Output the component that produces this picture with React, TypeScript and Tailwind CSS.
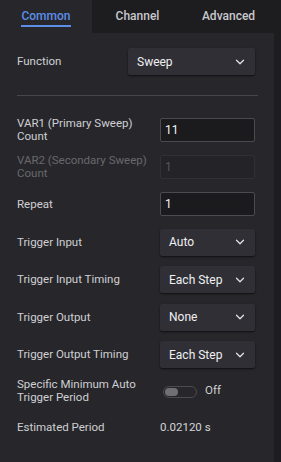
import React from 'react';
import { ChevronDown } from 'lucide-react';

const font = { fontFamily: 'Roboto, "Liberation Sans", sans-serif' };

const Select = ({ value, wide }: { value: string; wide?: boolean }) => (
  <div
    className={`flex h-[27px] items-center justify-between rounded-[2px] bg-[#2f2f35] pl-[9px] pr-[8px] text-[12px] text-[#f0f0f2] shadow-[0_1px_2px_rgba(0,0,0,0.6)] ${
      wide ? 'w-[127px]' : 'w-[95px]'
    }`}
  >
    <span>{value}</span>
    <ChevronDown className="h-[14px] w-[14px] text-[#e0e0e4]" strokeWidth={2.2} />
  </div>
);

const Input = ({ value, disabled }: { value: string; disabled?: boolean }) => (
  <div
    className={`flex h-[24px] w-[95px] items-center rounded-[2px] border pl-[4px] text-[12px] ${
      disabled ? 'border-[#303035] bg-[#242428] text-[#55555a]' : 'border-[#4a4a50] bg-[#1b1b1e] text-[#f4f4f6]'
    }`}
  >
    {value}
  </div>
);

const Row = ({ label, h, disabled, children }: { label: React.ReactNode; h: string; disabled?: boolean; children: React.ReactNode }) => (
  <div className={`flex items-center ${h}`}>
    <div className={`w-[143px] text-[11.5px] leading-[13px] ${disabled ? 'text-[#68686d]' : 'text-[#cfcfd3]'}`}>{label}</div>
    {children}
  </div>
);

export default function App() {
  return (
    <div className="flex h-[462px] w-[281px] bg-[#1d1d20]" style={font}>
      <div className="flex w-[274px] flex-col">
        <div className="flex h-[33px] text-[12px] font-medium">
          <div className="flex w-[92px] flex-col items-center bg-[#27272b] pt-[9px] text-[#5b8ee8]">
            <span className="border-b-2 border-[#5b8ee8] pb-[2px] leading-[14px]">Common</span>
          </div>
          <div className="flex w-[91px] justify-center pt-[9px] leading-[14px] text-[#c8c8cc]">Channel</div>
          <div className="flex w-[91px] justify-center pt-[9px] leading-[14px] text-[#c8c8cc]">Advanced</div>
        </div>
        <div className="flex flex-1 flex-col bg-[#27272b] pl-[17px] pt-[15px]">
          <div className="flex h-[27px] items-center pr-[19px]">
            <div className="w-[111px] text-[11.5px] text-[#cfcfd3]">Function</div>
            <Select value="Sweep" wide />
          </div>
          <div className="mr-[16px] mt-[20px] h-px bg-[#46464b]" />
          <div className="mt-[15px]">
            <Row label={<>VAR1 (Primary Sweep)<br />Count</>} h="h-[37px]">
              <Input value="11" />
            </Row>
            <Row label={<>VAR2 (Secondary Sweep)<br />Count</>} h="h-[37px]" disabled>
              <Input value="1" disabled />
            </Row>
            <Row label="Repeat" h="h-[38px]">
              <Input value="1" />
            </Row>
            <Row label="Trigger Input" h="h-[38px]">
              <Select value="Auto" />
            </Row>
            <Row label="Trigger Input Timing" h="h-[37px]">
              <Select value="Each Step" />
            </Row>
            <Row label="Trigger Output" h="h-[38px]">
              <Select value="None" />
            </Row>
            <Row label="Trigger Output Timing" h="h-[37px]">
              <Select value="Each Step" />
            </Row>
            <Row label={<>Specific Minimum Auto<br />Trigger Period</>} h="h-[36px]">
              <div className="flex items-start pl-[3px]">
                <div className="mt-[4px] flex h-[12px] w-[34px] items-center rounded-full border border-[#4a4a4f] px-[1px]">
                  <div className="h-[8px] w-[13px] rounded-full bg-[#6f6f75]" />
                </div>
                <span className="ml-[8px] text-[11.5px] text-[#cfcfd3]">Off</span>
              </div>
            </Row>
            <Row label="Estimated Period" h="h-[37px]">
              <span className="text-[11.5px] text-[#d4d4d8]">0.02120 s</span>
            </Row>
          </div>
        </div>
      </div>
    </div>
  );
}
